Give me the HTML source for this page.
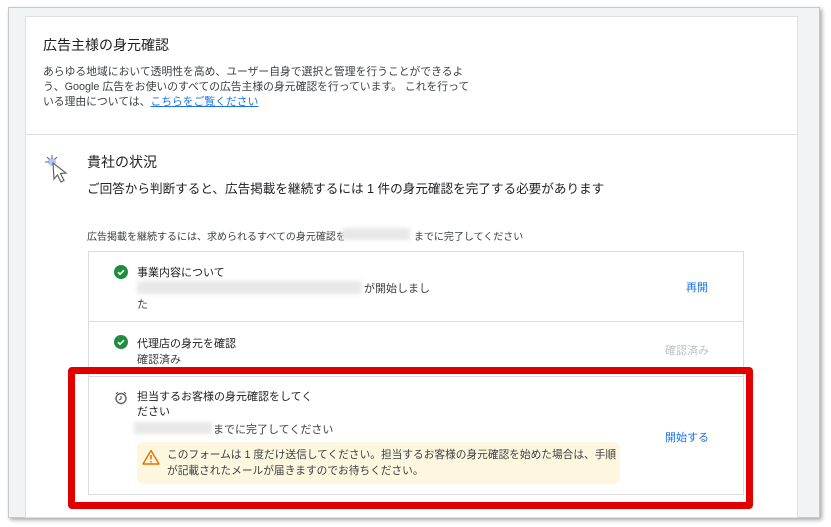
<!DOCTYPE html>
<html><head><meta charset="utf-8"><style>
*{margin:0;padding:0;box-sizing:border-box}
body{width:831px;height:527px;background:#fff;position:relative;overflow:hidden;font-family:"Liberation Sans","Noto Sans CJK JP",sans-serif;color:#3c4043}
.abs{position:absolute}
.frame{left:8px;top:7px;width:812px;height:511px;background:#f1f3f4;border:1px solid #c8c8c8;box-shadow:2px 2px 4px rgba(0,0,0,.35)}
.card{left:25px;top:16px;width:773px;height:502px;background:#fff;border:1px solid #e0e0e0}
.t{position:absolute;white-space:nowrap}
.blur{position:absolute;background:#e8e8e8;filter:blur(2px)}
.chk{position:absolute;width:14px;height:14px;border-radius:50%;background:#1e8e3e}
</style></head><body>
<div class="abs frame"></div>
<div class="abs card"></div>
<div class="t" style="left:43px;top:35px;font-size:14px;color:#202124">広告主様の身元確認</div>
<div class="t" style="left:43px;top:65px;font-size:10.8px;line-height:15px;color:#3c4043">あらゆる地域において透明性を高め、ユーザー自身で選択と管理を行うことができるよ<br>う、Google 広告をお使いのすべての広告主様の身元確認を行っています。 これを行って<br>いる理由については、<span style="color:#1a73e8;text-decoration:underline">こちらをご覧ください</span></div>
<div class="abs" style="left:26px;top:134px;width:772px;height:1px;background:#dadce0"></div>
<svg class="abs" style="left:42px;top:152px" width="32" height="34" viewBox="0 0 32 34"><circle cx="10" cy="10" r="4" fill="#aecbfa"/><path d="M11 11 L12 27 L15.5 23 L19 30 L22 28.5 L18.5 21.5 L24 21 Z" fill="#fff" stroke="#5f6368" stroke-width="1.2"/><path d="M3 10h4M10 3v4M5 5l2.5 2.5M15 5l-2.5 2.5" stroke="#5f6368" stroke-width="1"/></svg>
<div class="t" style="left:87px;top:152px;font-size:14px;color:#202124">貴社の状況</div>
<div class="t" style="left:87px;top:178px;font-size:12.6px;color:#202124">ご回答から判断すると、広告掲載を継続するには 1 件の身元確認を完了する必要があります</div>
<div class="t" style="left:87px;top:228px;font-size:10px;color:#3c4043">広告掲載を継続するには、求められるすべての身元確認を<span style="display:inline-block;width:68px"></span>までに完了してください</div>
<div class="blur" style="left:342px;top:228px;width:68px;height:12px"></div>
<div class="abs" style="left:88px;top:251px;width:656px;height:244px;border:1px solid #dadce0"></div>
<div class="abs" style="left:88px;top:321px;width:656px;height:1px;background:#dadce0"></div>
<div class="abs" style="left:88px;top:376px;width:656px;height:1px;background:#dadce0"></div>
<div class="chk" style="left:114px;top:265px"></div>
<svg class="abs" style="left:114px;top:265px" width="14" height="14"><path d="M4 7.2l2 2 4-4" stroke="#fff" stroke-width="1.6" fill="none"/></svg>
<div class="t" style="left:137px;top:264px;font-size:11px;color:#202124">事業内容について</div>
<div class="blur" style="left:137px;top:281px;width:225px;height:13px"></div>
<div class="t" style="left:364px;top:280px;font-size:11px">が開始しまし</div>
<div class="t" style="left:137px;top:296px;font-size:11px">た</div>
<div class="t" style="left:686px;top:279px;font-size:11px;color:#1a73e8">再開</div>
<div class="chk" style="left:114px;top:335px"></div>
<svg class="abs" style="left:114px;top:335px" width="14" height="14"><path d="M4 7.2l2 2 4-4" stroke="#fff" stroke-width="1.6" fill="none"/></svg>
<div class="t" style="left:137px;top:335px;font-size:11px;color:#202124">代理店の身元を確認</div>
<div class="t" style="left:137px;top:351px;font-size:11px">確認済み</div>
<div class="t" style="left:665px;top:342px;font-size:11px;color:#bdc1c6">確認済み</div>
<svg class="abs" style="left:114px;top:391px" width="14" height="14" viewBox="0 0 14 14"><circle cx="7" cy="7.5" r="5" fill="none" stroke="#5f6368" stroke-width="1.4"/><path d="M7 5v3l-2 1" stroke="#5f6368" stroke-width="1.2" fill="none"/><path d="M2 3l2-2M12 3l-2-2" stroke="#5f6368" stroke-width="1.2"/></svg>
<div class="t" style="left:137px;top:390px;font-size:11px;color:#202124;line-height:15px">担当するお客様の身元確認をしてく<br>ださい</div>
<div class="blur" style="left:134px;top:422px;width:78px;height:12px"></div>
<div class="t" style="left:213px;top:421px;font-size:11px">までに完了してください</div>
<div class="abs" style="left:137px;top:442px;width:483px;height:42px;background:#fef7e0;border-radius:6px"></div>
<svg class="abs" style="left:142px;top:449px" width="18" height="16" viewBox="0 0 18 16"><path d="M9 1.5L17 15H1Z" fill="none" stroke="#e37400" stroke-width="1.5" stroke-linejoin="round"/><path d="M9 6v4.5M9 12v1.5" stroke="#e37400" stroke-width="1.5"/></svg>
<div class="t" style="left:167px;top:447px;font-size:10.7px;line-height:16px;color:#3c4043">このフォームは 1 度だけ送信してください。担当するお客様の身元確認を始めた場合は、手順<br>が記載されたメールが届きますのでお待ちください。</div>
<div class="t" style="left:665px;top:429px;font-size:11px;color:#1a73e8">開始する</div>
<div class="abs" style="left:68px;top:367px;width:685px;height:142px;border:7px solid #e00000;border-radius:4px"></div>
</body></html>
